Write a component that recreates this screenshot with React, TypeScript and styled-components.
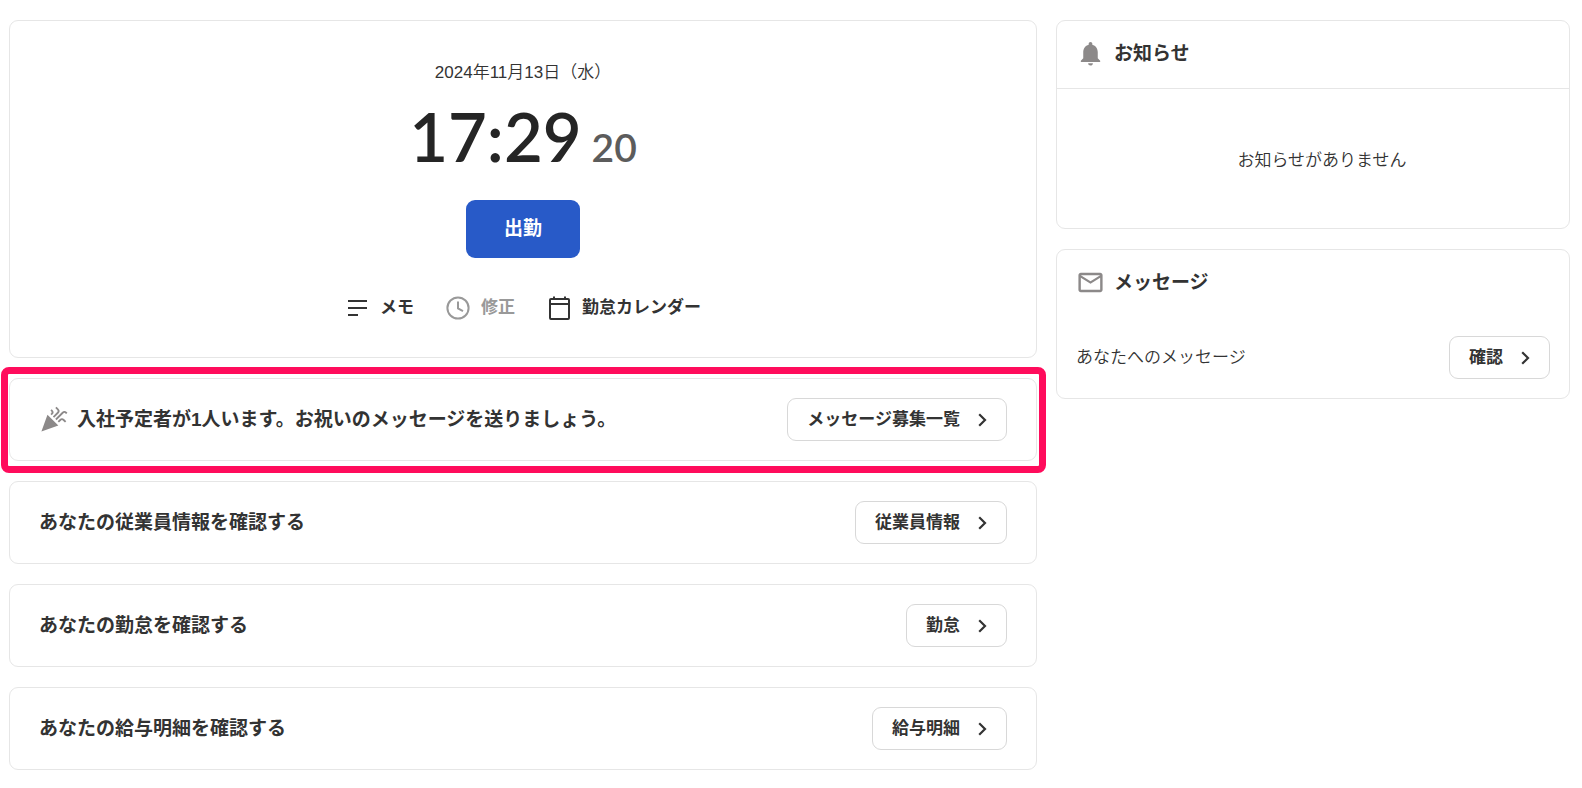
import React from "react";
import styled, { createGlobalStyle } from "styled-components";
import { MdCelebration, MdMailOutline, MdNotifications } from "react-icons/md";

const GlobalStyle = createGlobalStyle`
  *, *::before, *::after { box-sizing: border-box; }
  body {
    margin: 0;
    background: #fff;
    color: #333;
    font-family: "Liberation Sans", "Noto Sans CJK JP", sans-serif;
    font-size: 17px;
    line-height: 24px;
  }
`;

const Page = styled.main`
  display: grid;
  grid-template-columns: 2fr 1fr;
  align-items: start;
  gap: 19px;
  padding: 20px 12px 17px 9px;
`;

const Column = styled.div`
  display: flex;
  flex-direction: column;
  gap: 20px;
  min-width: 0;
`;

const Card = styled.section`
  border: 1px solid #e6e6e6;
  border-radius: 9px;
  background: #fff;
`;

const ClockCard = styled(Card)`
  display: flex;
  flex-direction: column;
  align-items: center;
  padding: 40px 20px 37px;
`;

const DateText = styled.p`
  margin: 0;
  font-weight: 350;
`;

const Clock = styled.time`
  display: flex;
  align-items: baseline;
  gap: 10px;
  margin: 11px 0 13px;
  font-family: Lato, "Liberation Sans", sans-serif;
  font-weight: 600;
  font-size: 67px;
  line-height: 80px;
  color: #252525;
`;

const Seconds = styled.span`
  font-size: 39px;
  color: #5c5c5c;
`;

const PunchButton = styled.button`
  height: 58px;
  padding: 0 38px;
  border: 0;
  border-radius: 9px;
  background: #285ac8;
  color: #fff;
  font: inherit;
  font-size: 19px;
  font-weight: 700;
  cursor: pointer;
`;

const Actions = styled.div`
  display: flex;
  gap: 32px;
  margin-top: 38px;
`;

const Action = styled.button`
  display: flex;
  align-items: center;
  gap: 11px;
  padding: 0;
  border: 0;
  background: none;
  color: #333;
  font: inherit;
  font-weight: 700;
  line-height: 24px;
  cursor: pointer;

  &:disabled {
    color: #999;
    cursor: default;
  }
`;

const Highlight = styled.div`
  position: relative;

  &::after {
    content: "";
    position: absolute;
    inset: -11px -9px -12px -8px;
    border: 7px solid #ff0c5c;
    border-radius: 8px;
    pointer-events: none;
  }
`;

const RowCard = styled(Card)`
  display: flex;
  align-items: center;
  justify-content: space-between;
  gap: 20px;
  padding: 19px 29px;
`;

const Heading = styled.h2`
  display: flex;
  align-items: center;
  gap: 9px;
  margin: 0;
  font-size: 19px;
  font-weight: 700;
  line-height: 28px;

  svg {
    flex: none;
    color: #8c8989;
  }
`;

const LinkButton = styled.a`
  display: flex;
  flex: none;
  align-items: center;
  gap: 18px;
  height: 43px;
  padding: 0 19px;
  border: 1px solid #d8d8d8;
  border-radius: 9px;
  background: #fff;
  color: #333;
  font-weight: 700;
  text-decoration: none;
`;

const PanelHead = styled.header<{ $divided?: boolean }>`
  padding: 18px 19px 20px;
  border-bottom: ${(p) => (p.$divided ? "1px solid #e6e6e6" : "0")};
`;

const EmptyBody = styled.p`
  margin: 0;
  padding: 60px 20px 55px 38px;
  font-weight: 350;
  text-align: center;
`;

const MessageRow = styled.div`
  display: flex;
  align-items: center;
  justify-content: space-between;
  padding: 19px;
  font-weight: 350;
`;

const Chevron = () => (
  <svg width="9" height="14" viewBox="0 0 9 14" fill="none" stroke="currentColor" strokeWidth="2.2" aria-hidden="true">
    <path d="M1.2 1.2 7 7l-5.8 5.8" />
  </svg>
);

const MemoIcon = () => (
  <svg width="24" height="24" viewBox="0 0 24 24" fill="none" stroke="currentColor" strokeWidth="2" aria-hidden="true">
    <path d="M3 5h19M3 12h19M3 19h10" />
  </svg>
);

const ClockIcon = () => (
  <svg width="24" height="24" viewBox="0 0 24 24" fill="none" stroke="currentColor" strokeWidth="2" aria-hidden="true">
    <circle cx="12" cy="12" r="10.6" />
    <path d="M12 5.5v7l5 2.6" />
  </svg>
);

const CalendarIcon = () => (
  <svg width="24" height="24" viewBox="0 0 24 24" fill="none" stroke="currentColor" strokeWidth="2" aria-hidden="true">
    <rect x="3" y="3" width="19" height="20" rx="1" />
    <path d="M3 8h19M7 0.5v3M18 0.5v3" />
  </svg>
);

const ArrowLink = ({ children }: { children: React.ReactNode }) => (
  <LinkButton href="#">
    <span>{children}</span>
    <Chevron />
  </LinkButton>
);

const rows = [
  { title: "あなたの従業員情報を確認する", link: "従業員情報" },
  { title: "あなたの勤怠を確認する", link: "勤怠" },
  { title: "あなたの給与明細を確認する", link: "給与明細" },
];

export default function App() {
  return (
    <>
      <GlobalStyle />
      <Page>
        <Column>
          <ClockCard>
            <DateText>2024年11月13日（水）</DateText>
            <Clock dateTime="2024-11-13T17:29:20">
              <span>17:29</span>
              <Seconds>20</Seconds>
            </Clock>
            <PunchButton type="button">出勤</PunchButton>
            <Actions>
              <Action type="button">
                <MemoIcon />
                <span>メモ</span>
              </Action>
              <Action type="button" disabled>
                <ClockIcon />
                <span>修正</span>
              </Action>
              <Action type="button">
                <CalendarIcon />
                <span>勤怠カレンダー</span>
              </Action>
            </Actions>
          </ClockCard>
          <Highlight>
            <RowCard>
              <Heading>
                <MdCelebration size={29} aria-hidden="true" />
                <span>入社予定者が1人います。お祝いのメッセージを送りましょう。</span>
              </Heading>
              <ArrowLink>メッセージ募集一覧</ArrowLink>
            </RowCard>
          </Highlight>
          {rows.map((row) => (
            <RowCard key={row.link}>
              <Heading>{row.title}</Heading>
              <ArrowLink>{row.link}</ArrowLink>
            </RowCard>
          ))}
        </Column>
        <Column>
          <Card>
            <PanelHead $divided>
              <Heading>
                <MdNotifications size={29} aria-hidden="true" />
                <span>お知らせ</span>
              </Heading>
            </PanelHead>
            <EmptyBody>お知らせがありません</EmptyBody>
          </Card>
          <Card>
            <PanelHead>
              <Heading>
                <MdMailOutline size={29} aria-hidden="true" />
                <span>メッセージ</span>
              </Heading>
            </PanelHead>
            <MessageRow>
              <span>あなたへのメッセージ</span>
              <ArrowLink>確認</ArrowLink>
            </MessageRow>
          </Card>
        </Column>
      </Page>
    </>
  );
}
